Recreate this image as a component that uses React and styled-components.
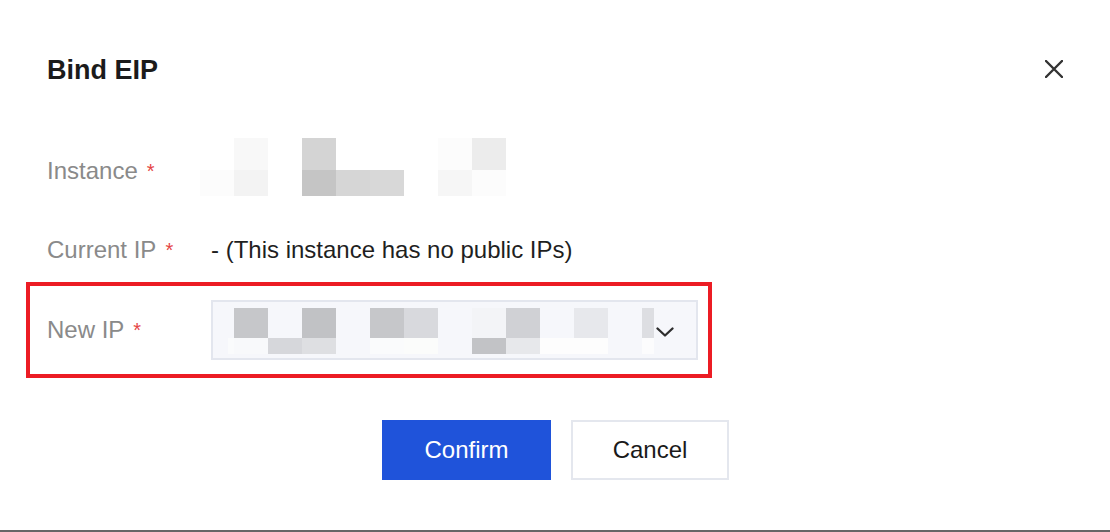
import React from "react";
import styled, { createGlobalStyle } from "styled-components";

const Global = createGlobalStyle`
  html, body { margin: 0; padding: 0; background: #fff; }
  body { font-family: "Liberation Sans", Arial, Helvetica, sans-serif; }
  * { box-sizing: border-box; }
`;

const Dialog = styled.div`
  width: 1110px;
  height: 532px;
  background: #fff;
  border-bottom: 2px solid #666;
  display: flex;
  flex-direction: column;
`;

const Header = styled.div`
  height: 138px;
  padding: 0 46px 0 47px;
  display: flex;
  align-items: center;
  justify-content: space-between;
`;

const Title = styled.h2`
  margin: 0;
  font-size: 27px;
  font-weight: 700;
  color: #1b1b1b;
  line-height: 30px;
  padding-top: 2px;
`;

const CloseButton = styled.button`
  width: 20px;
  height: 20px;
  padding: 0;
  border: 0;
  background: none;
  display: flex;
  align-items: center;
  justify-content: center;
  cursor: pointer;
`;

const Row = styled.div`
  display: flex;
  align-items: ${(p) => (p.$top ? "flex-start" : "center")};
  height: ${(p) => p.$h}px;
  margin-top: ${(p) => p.$mt || 0}px;
  padding-left: 47px;
`;

const HighlightRow = styled.div`
  display: flex;
  align-items: center;
  margin: 1px 0 0 26px;
  width: 686px;
  height: 96px;
  border: 4px solid #ec1c24;
  padding: 0 10px 0 17px;
`;

const Label = styled.div`
  width: ${(p) => p.$w}px;
  flex-shrink: 0;
  font-size: 24px;
  line-height: 28px;
  color: #8a8a8a;
  margin-top: ${(p) => p.$mt || 0}px;
`;

const Required = styled.span`
  color: #e54545;
  font-size: 20px;
  margin-left: 9px;
  position: relative;
  top: -1px;
`;

const Value = styled.div`
  font-size: 24px;
  line-height: 28px;
  color: #1f1f1f;
`;

const Mosaic = styled.div`
  display: grid;
  grid-template-columns: ${(p) => p.$cols};
  grid-template-rows: ${(p) => p.$rows};
`;

const Cell = styled.div`
  background: ${(p) => p.$c || "transparent"};
`;

const Select = styled.div`
  width: 487px;
  height: 60px;
  background: #f6f7fb;
  border: 2px solid #e3e6ee;
  display: flex;
  align-items: flex-start;
  padding: 6px 22px 0 15px;
`;

const Chevron = styled.div`
  margin-left: auto;
  align-self: center;
  display: flex;
  margin-top: -2px;
`;

const Footer = styled.div`
  margin-top: 42px;
  display: flex;
  justify-content: center;
  gap: 20px;
  padding-left: 1px;
`;

const Button = styled.button`
  height: 60px;
  width: ${(p) => p.$w}px;
  font-family: "Liberation Sans", Arial, sans-serif;
  font-size: 24px;
  cursor: pointer;
  border: ${(p) => (p.$primary ? "0" : "2px solid #e4e7ee")};
  background: ${(p) => (p.$primary ? "#1f53da" : "#fff")};
  color: ${(p) => (p.$primary ? "#fff" : "#1a1a1a")};
  padding: 0;
`;

const instanceCells = [
  [null, "#f8f8f8", null, "#d4d4d4", null, null, null, "#fcfcfc", "#ececec"],
  ["#fcfcfc", "#f3f3f3", null, "#c5c5c5", "#d6d6d6", "#d8d8d8", null, "#f6f6f6", "#fcfcfc"],
];

const ipCells = [
  [null, "#c6c7ca", null, "#c1c2c5", null, "#c6c7ca", "#d8d9dd", null, "#f3f4f7", "#d0d1d5", null, "#e7e8ec", null, "#dddee2"],
  ["#fafbfc", "#f8f9fb", "#d6d7db", "#dedfe2", null, "#fafbfc", "#fbfcfb", null, "#c2c3c6", "#e7e8eb", "#fdfdfd", "#fdfdfd", null, "#fcfcfd"],
];

function renderCells(rows) {
  return rows.flatMap((r, i) => r.map((c, j) => <Cell key={`${i}-${j}`} $c={c} />));
}

export default function App() {
  return (
    <>
      <Global />
      <Dialog>
        <Header>
          <Title>Bind EIP</Title>
          <CloseButton aria-label="Close">
            <svg width="18" height="18" viewBox="0 0 18 18">
              <path d="M1 1L17 17M17 1L1 17" stroke="#333" strokeWidth="2.4" strokeLinecap="round" />
            </svg>
          </CloseButton>
        </Header>

        <Row $h={58} $top>
          <Label $w={153} $mt={19}>
            Instance<Required>*</Required>
          </Label>
          <Mosaic $cols="repeat(9, 34px)" $rows="32px 26px">
            {renderCells(instanceCells)}
          </Mosaic>
        </Row>

        <Row $h={62} $mt={23}>
          <Label $w={164}>
            Current IP<Required>*</Required>
          </Label>
          <Value>- (This instance has no public IPs)</Value>
        </Row>

        <HighlightRow>
          <Label $w={164}>
            New IP<Required>*</Required>
          </Label>
          <Select>
            <Mosaic $cols="6px repeat(12, 34px) 12px" $rows="30px 16px">
              {renderCells(ipCells)}
            </Mosaic>
            <Chevron>
              <svg width="18" height="10" viewBox="0 0 18 10">
                <path d="M1.5 1.5L9 8.5L16.5 1.5" fill="none" stroke="#2e2e2e" strokeWidth="2.3" strokeLinecap="round" strokeLinejoin="round" />
              </svg>
            </Chevron>
          </Select>
        </HighlightRow>

        <Footer>
          <Button $primary $w={169}>Confirm</Button>
          <Button $w={158}>Cancel</Button>
        </Footer>
      </Dialog>
    </>
  );
}
